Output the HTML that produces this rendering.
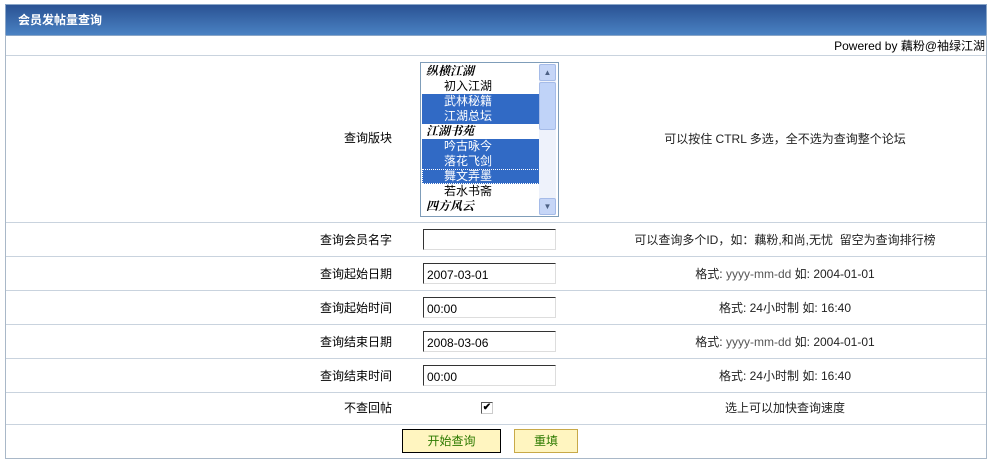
<!DOCTYPE html>
<html><head><meta charset="utf-8"><style>
*{margin:0;padding:0;box-sizing:border-box}
body{width:991px;height:463px;background:#fff;font-family:"Liberation Sans","Noto Sans CJK SC",sans-serif;font-size:12px;color:#000;position:relative;overflow:hidden}
.a{position:absolute}
.hdr{left:5px;top:4px;width:982px;height:32px;background:linear-gradient(#2a5293,#4a82c3);border:1px solid #8aa6c8;color:#fff;font-weight:bold;font-size:12px;line-height:30px;padding-left:12px}
.frame{left:5px;top:35px;width:982px;height:424px;border:1px solid #a9b8c8;border-top:none}
.ln{left:6px;width:980px;height:1px;background:#c9d3de}
.lab{width:392px;left:0;text-align:right;line-height:16px}
.hint{left:585px;width:400px;text-align:center;line-height:16px;color:#222}
.inp{left:423px;width:133px;height:21px;border:1px solid #7f9db9;border-top-color:#333;border-left-color:#333;border-right-color:#ddd;border-bottom-color:#ddd;background:#fff;font-size:12px;line-height:16px;padding:3px 0 0 3px}
.sel{left:420px;top:62px;width:139px;height:155px;border:1px solid #7f9db9;background:#fff;padding:1px}
.o{height:15px;line-height:15px;padding-left:22px;font-size:12px;width:118px}
.g{font-weight:bold;font-style:italic;padding-left:4px;font-family:"Liberation Serif","Noto Serif CJK SC",serif}
.s{background:#316ac5;color:#fff}
.sb{left:539px;top:64px;width:17px;height:151px;background:#eef2fb}
.btn{height:24px;border:1px solid #c8a948;background:#fff5c0;color:#2d7a00;text-align:center;line-height:22px;font-size:12px}
</style></head><body>
<div class="a hdr">会员发帖量查询</div>
<div class="a frame"></div>
<div class="a" style="right:6px;top:39px;line-height:14px;font-size:12px">Powered by 藕粉@袖绿江湖</div>
<div class="a ln" style="top:55px"></div>

<div class="a lab" style="top:130px">查询版块</div>
<div class="a sel">
<div class="o g">纵横江湖</div>
<div class="o">初入江湖</div>
<div class="o s">武林秘籍</div>
<div class="o s">江湖总坛</div>
<div class="o g">江湖书苑</div>
<div class="o s">吟古咏今</div>
<div class="o s">落花飞剑</div>
<div class="o s" style="outline:1px dotted #fff;outline-offset:-1px">舞文弄墨</div>
<div class="o">若水书斋</div>
<div class="o g">四方风云</div>
</div>
<div class="a sb">
<div class="a" style="left:0;top:0;width:17px;height:17px;background:#c6d6f7;border:1px solid #a5bbe8;border-radius:2px;color:#4d6185;font-size:8px;text-align:center;line-height:15px">▲</div>
<div class="a" style="left:0;top:18px;width:17px;height:48px;background:#c0d3f8;border:1px solid #a5bbe8;border-radius:2px"></div>
<div class="a" style="left:0;top:134px;width:17px;height:17px;background:#c6d6f7;border:1px solid #a5bbe8;border-radius:2px;color:#4d6185;font-size:8px;text-align:center;line-height:15px">▼</div>
</div>
<div class="a hint" style="top:131px">可以按住 CTRL 多选，全不选为查询整个论坛</div>
<div class="a ln" style="top:222px"></div>

<div class="a lab" style="top:232px">查询会员名字</div>
<div class="a inp" style="top:229px"></div>
<div class="a hint" style="top:232px">可以查询多个ID，如：藕粉,和尚,无忧&nbsp;&nbsp;留空为查询排行榜</div>
<div class="a ln" style="top:256px"></div>

<div class="a lab" style="top:266px">查询起始日期</div>
<div class="a inp" style="top:263px">2007-03-01</div>
<div class="a hint" style="top:266px">格式: <span style="color:#555">yyyy-mm-dd</span> 如: 2004-01-01</div>
<div class="a ln" style="top:290px"></div>

<div class="a lab" style="top:300px">查询起始时间</div>
<div class="a inp" style="top:297px">00:00</div>
<div class="a hint" style="top:300px">格式: 24小时制 如: 16:40</div>
<div class="a ln" style="top:324px"></div>

<div class="a lab" style="top:334px">查询结束日期</div>
<div class="a inp" style="top:331px">2008-03-06</div>
<div class="a hint" style="top:334px">格式: <span style="color:#555">yyyy-mm-dd</span> 如: 2004-01-01</div>
<div class="a ln" style="top:358px"></div>

<div class="a lab" style="top:368px">查询结束时间</div>
<div class="a inp" style="top:365px">00:00</div>
<div class="a hint" style="top:368px">格式: 24小时制 如: 16:40</div>
<div class="a ln" style="top:392px"></div>

<div class="a lab" style="top:400px">不查回帖</div>
<div class="a" style="left:481px;top:402px;width:12px;height:12px;border:1px solid #555;border-right-color:#ccc;border-bottom-color:#ccc;background:#fff;font-size:10px;line-height:10px;text-align:center;font-weight:bold">✔</div>
<div class="a hint" style="top:400px">选上可以加快查询速度</div>
<div class="a ln" style="top:424px"></div>

<div class="a btn" style="left:402px;top:429px;width:99px;border-color:#000">开始查询</div>
<div class="a btn" style="left:514px;top:429px;width:64px">重填</div>
<div class="a ln" style="top:458px;background:#a9b8c8"></div>
</body></html>
